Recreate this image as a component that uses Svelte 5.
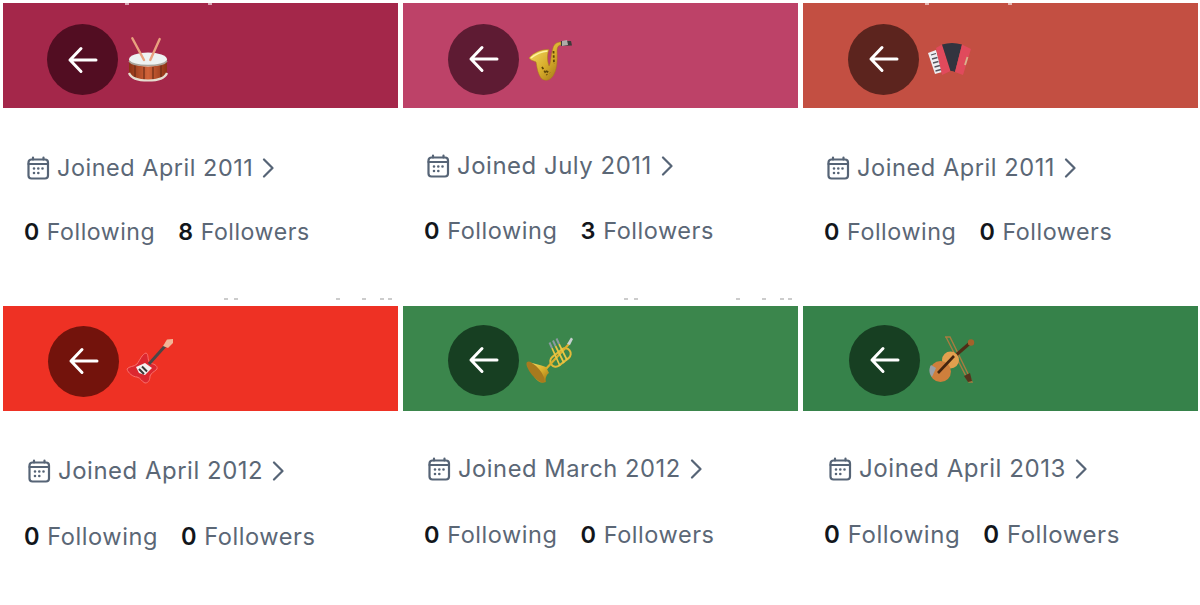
<script>
  const upper = [122, 205];
  const lower = [221, 231, 333, 359, 377, 385];
  const cards = [
    { color: '#a4274a', circle: '#520d22', icon: 'drum', joined: 'April 2011', followers: 8, pad: 44, top: 8, joinTop: 46, statTop: 36, joinSize: 23.4, statSize: 23.1, joinPad: 23, specks: upper, kind: 'light' },
    { color: '#bd4268', circle: '#5e1b33', icon: 'sax', joined: 'July 2011', followers: 3, pad: 45, top: 7, joinTop: 44, statTop: 37, joinSize: 23.9, statSize: 23.5, joinPad: 23, specks: [], kind: 'light' },
    { color: '#c34f42', circle: '#5c241e', icon: 'accordion', joined: 'April 2011', followers: 0, pad: 45, top: 7, joinTop: 46, statTop: 36, joinSize: 23.6, statSize: 23.3, joinPad: 23, specks: upper, kind: 'light' },
    { color: '#ee3124', circle: '#73130c', icon: 'guitar', joined: 'April 2012', followers: 0, pad: 45, top: 5, joinTop: 46, statTop: 38, joinSize: 23.9, statSize: 23.6, joinPad: 24, specks: lower, kind: 'grey' },
    { color: '#3b864c', circle: '#173f22', icon: 'trumpet', joined: 'March 2012', followers: 0, pad: 45, top: 3, joinTop: 44, statTop: 38, joinSize: 23.7, statSize: 23.5, joinPad: 24, specks: lower, kind: 'grey' },
    { color: '#36824a', circle: '#173f22', icon: 'violin', joined: 'April 2013', followers: 0, pad: 46, top: 3, joinTop: 44, statTop: 38, joinSize: 24.1, statSize: 24, joinPad: 25, specks: [], kind: 'grey' }
  ];
</script>

<main class="sheet">
  {#each cards as c}
    <article class="card">
      {#each c.specks as x}
        <i class="speck {c.kind}" style="left:{x}px"></i>
      {/each}
      <header class="banner" style="background:{c.color};padding-left:{c.pad}px;padding-top:{c.top}px">
        <button class="back" style="background:{c.circle}" aria-label="Back">
          <svg viewBox="0 0 32 32" width="32" height="32" fill="none" stroke="#fff" stroke-width="3" stroke-linecap="round" stroke-linejoin="round">
            <path d="M3 16H29M14 4.500 3 16 14 27.500" />
          </svg>
        </button>
        <svg class="emoji" viewBox="0 0 50 50" width="50" height="50">
          <defs>
            <linearGradient id="gold-{c.icon}" x1="0" y1="0" x2="1" y2="1">
              <stop offset="0" stop-color="#f6e26e" />
              <stop offset=".55" stop-color="#d9ae2c" />
              <stop offset="1" stop-color="#9a6f12" />
            </linearGradient>
            <linearGradient id="shell-{c.icon}" x1="0" y1="0" x2="1" y2="0">
              <stop offset="0" stop-color="#8c3214" />
              <stop offset=".5" stop-color="#d2643a" />
              <stop offset="1" stop-color="#8c3214" />
            </linearGradient>
          </defs>
          {#if c.icon === 'drum'}
            <path d="M6 25V38C8 43 16 45.500 25 45.500S42 43 44 38V25Z" fill="url(#shell-drum)" />
            <path d="M12 30V43M21 32V45M30 32V45M38 30V43" stroke="#6a2c16" stroke-width="1.200" />
            <path d="M6 38C8 43 16 45.500 25 45.500S42 43 44 38" fill="none" stroke="#e6dccf" stroke-width="2.200" />
            <ellipse cx="25" cy="24.500" rx="19" ry="7" fill="#eef2f2" />
            <path d="M6 26C10 32 40 32 44 26" fill="none" stroke="#aaa39a" stroke-width="1.600" />
            <path d="M9.300 3.300 21 25M36.700 4 27.300 25" stroke="#e9a17e" stroke-width="2.400" stroke-linecap="round" />
          {:else if c.icon === 'sax'}
            <path d="M5 24C10 18 18 15 25 15.500 23 20 23 27 25 32 27 30 27 20 29 14 30 10 33 8 37 8L37 11C34 11 33 14 33 17 33.500 27 33 36 29 42 26 47 20 47.500 17 44 13 38 13 32 12 28 10 27 6 26 5 24Z" fill="url(#gold-sax)" stroke="#a87e16" stroke-width=".5" />
            <path d="M7 24C12 20 18 17.500 23.500 17" stroke="#fff3a0" stroke-width="1.300" fill="none" />
            <path d="M18 33 23 41M22 37 26 39M29.500 17 30 30" stroke="#5e4508" stroke-width="1.800" stroke-dasharray="2.500 1.800" fill="none" />
            <path d="M37 7 47 7 48 11.500 37 12Z" fill="#3e3a3b" />
            <path d="M38 7 43 6 44 11 38 12Z" fill="#b0aca8" />
          {:else if c.icon === 'accordion'}
            <path d="M4 19 12 16 18 38 11 40Z" fill="#eeedf0" />
            <path d="M7 21l5-1.500M8 25l5.500-1.500M9 29l5.500-1.500M10.500 33l5.500-1.500M11.500 37l5.500-1.500" stroke="#55545c" stroke-width="1.300" />
            <path d="M12 14 18 10.500 26.500 37 18 41Z" fill="#e04a5c" />
            <path d="M18 10.500Q28 7.500 38 10.500L31 38Q28.500 36.500 26.500 37Z" fill="#32343f" />
            <path d="M38 10.500 47 15 39 41 31 38Z" fill="#e04a5c" />
            <path d="M43.500 23 41 31" stroke="#d8b48c" stroke-width="1.800" />
          {:else if c.icon === 'guitar'}
            <path d="M22 17C25 18 23 24 26 27 29 28 34 29 33 33 30 36 27 37 26 40 26 43 25 47 21 47 18 46 17 42 13 41 9 41 4 37 3 33 5 30 10 31 13 28 16 24 18 18 22 17Z" fill="#dc2730" stroke="#f8706c" stroke-width="1" />
            <path d="M12 31 21 27 28 32 21 39 15 37Z" fill="#f4f0f0" />
            <path d="M25 28 42 9" stroke="#4b4646" stroke-width="3" />
            <path d="M15 33l5 5M18 30.500l5 5" stroke="#3a3838" stroke-width="2" />
            <path d="M39 10 43 3.500 49 3 49 7 44 12Z" fill="#f2b596" />
          {:else if c.icon === 'trumpet'}
            <rect x="25" y="17" width="23" height="11" rx="5.500" transform="rotate(-38 36.500 22.500)" fill="none" stroke="#e3ba3a" stroke-width="2" />
            <path d="M20 36 45 9" stroke="#dcae2e" stroke-width="2.200" />
            <path d="M28 13 36 31M31.500 11 40 28M35 9 43 25" stroke="#e8c645" stroke-width="1.700" />
            <path d="M28 13 25.500 7.500M31.500 11 29 5.500M35 9 32.500 3.500" stroke="#8a9aa0" stroke-width="2" />
            <path d="M43 9 47 2.500 49 4 46 10Z" fill="#c7d0d0" />
            <path d="M3 27C10 28 16 30 22 32 L25 38C22 40 21 44 22 47 15 50 10 44 3 27Z" fill="url(#gold-trumpet)" />
            <ellipse cx="11.500" cy="37" rx="13" ry="4.500" transform="rotate(50 11.500 37)" fill="#a87a1e" />
          {:else}
            <path d="M20 2 25 2 47 47 44 47 23 6 21 2" fill="none" stroke="#a77c40" stroke-width="1.400" />
            <path d="M39 41 45 38 47 46 43 47Z" fill="#56341c" />
            <path d="M30 21 45 8" stroke="#4f2d16" stroke-width="3.200" />
            <circle cx="46" cy="7.500" r="3.200" fill="#a4622b" />
            <circle cx="25.500" cy="25" r="8.500" fill="#e2a04e" />
            <circle cx="15.500" cy="36.500" r="10.500" fill="#cf7f3c" />
            <path d="M6 30C3.500 34 4 39 7 42L11 33Z" fill="#9aa0a8" />
            <path d="M13 38 29 21" stroke="#44240f" stroke-width="2.600" />
          {/if}
        </svg>
      </header>
      <div class="joined" style="margin-top:{c.joinTop}px;padding-left:{c.joinPad}px;font-size:{c.joinSize}px">
        <svg class="cal" viewBox="0 0 24 24" width="24" height="24" fill="none" stroke="#566476" stroke-width="2.200" stroke-linecap="round">
          <rect x="2.500" y="3.500" width="19.500" height="19" rx="3" />
          <path d="M2.500 8H22M7 1.500V3.500M17.500 1.500V3.500" />
          <path d="M8 12.500h.01M12.300 12.500h.01M16.500 12.500h.01M8 17h.01M12.300 17h.01" stroke-width="2.600" />
        </svg>
        <span>Joined {c.joined}</span>
        <svg class="chev" viewBox="0 0 12 20" width="12" height="20" fill="none" stroke="#566476" stroke-width="2.200" stroke-linecap="round" stroke-linejoin="round">
          <path d="M2 1.500 10.500 10 2 18.500" />
        </svg>
      </div>
      <div class="stats" style="margin-top:{c.statTop}px;font-size:{c.statSize}px">
        <span><b>0</b> Following</span>
        <span><b>{c.followers}</b> Followers</span>
      </div>
    </article>
  {/each}
</main>

<style>
  :global(body) {
    margin: 0;
    background: #fff;
  }
  .sheet {
    display: grid;
    grid-template-columns: repeat(3, 395px);
    grid-template-rows: 303px 299px;
    column-gap: 5px;
    padding: 3px 0 0 3px;
    font-family: Inter, "Liberation Sans", sans-serif;
    color: #5b6776;
  }
  .card {
    position: relative;
    line-height: 28px;
    letter-spacing: 0.55px;
    min-width: 0;
  }
  .speck {
    position: absolute;
    width: 4px;
    height: 2px;
    z-index: 1;
  }
  .speck.light {
    top: 0;
    background: rgba(255, 255, 255, 0.6);
  }
  .speck.grey {
    top: -8px;
    background: #ccc;
  }
  .banner {
    box-sizing: border-box;
    height: 105px;
    display: flex;
    align-items: center;
  }
  .back {
    width: 71px;
    height: 71px;
    flex: none;
    border: 0;
    padding: 0;
    border-radius: 50%;
    display: flex;
    align-items: center;
    justify-content: center;
  }
  .emoji {
    flex: none;
    display: block;
    margin-left: 5px;
    filter: blur(0.35px);
  }
  .joined {
    display: flex;
    align-items: center;
    height: 28px;
    white-space: nowrap;
  }
  .cal {
    flex: none;
    margin-right: 7px;
  }
  .chev {
    flex: none;
    margin-left: 9px;
  }
  .stats {
    display: flex;
    column-gap: 23px;
    padding-left: 21px;
    height: 28px;
    white-space: nowrap;
  }
  b {
    font-weight: 600;
    color: #12161b;
  }
</style>
